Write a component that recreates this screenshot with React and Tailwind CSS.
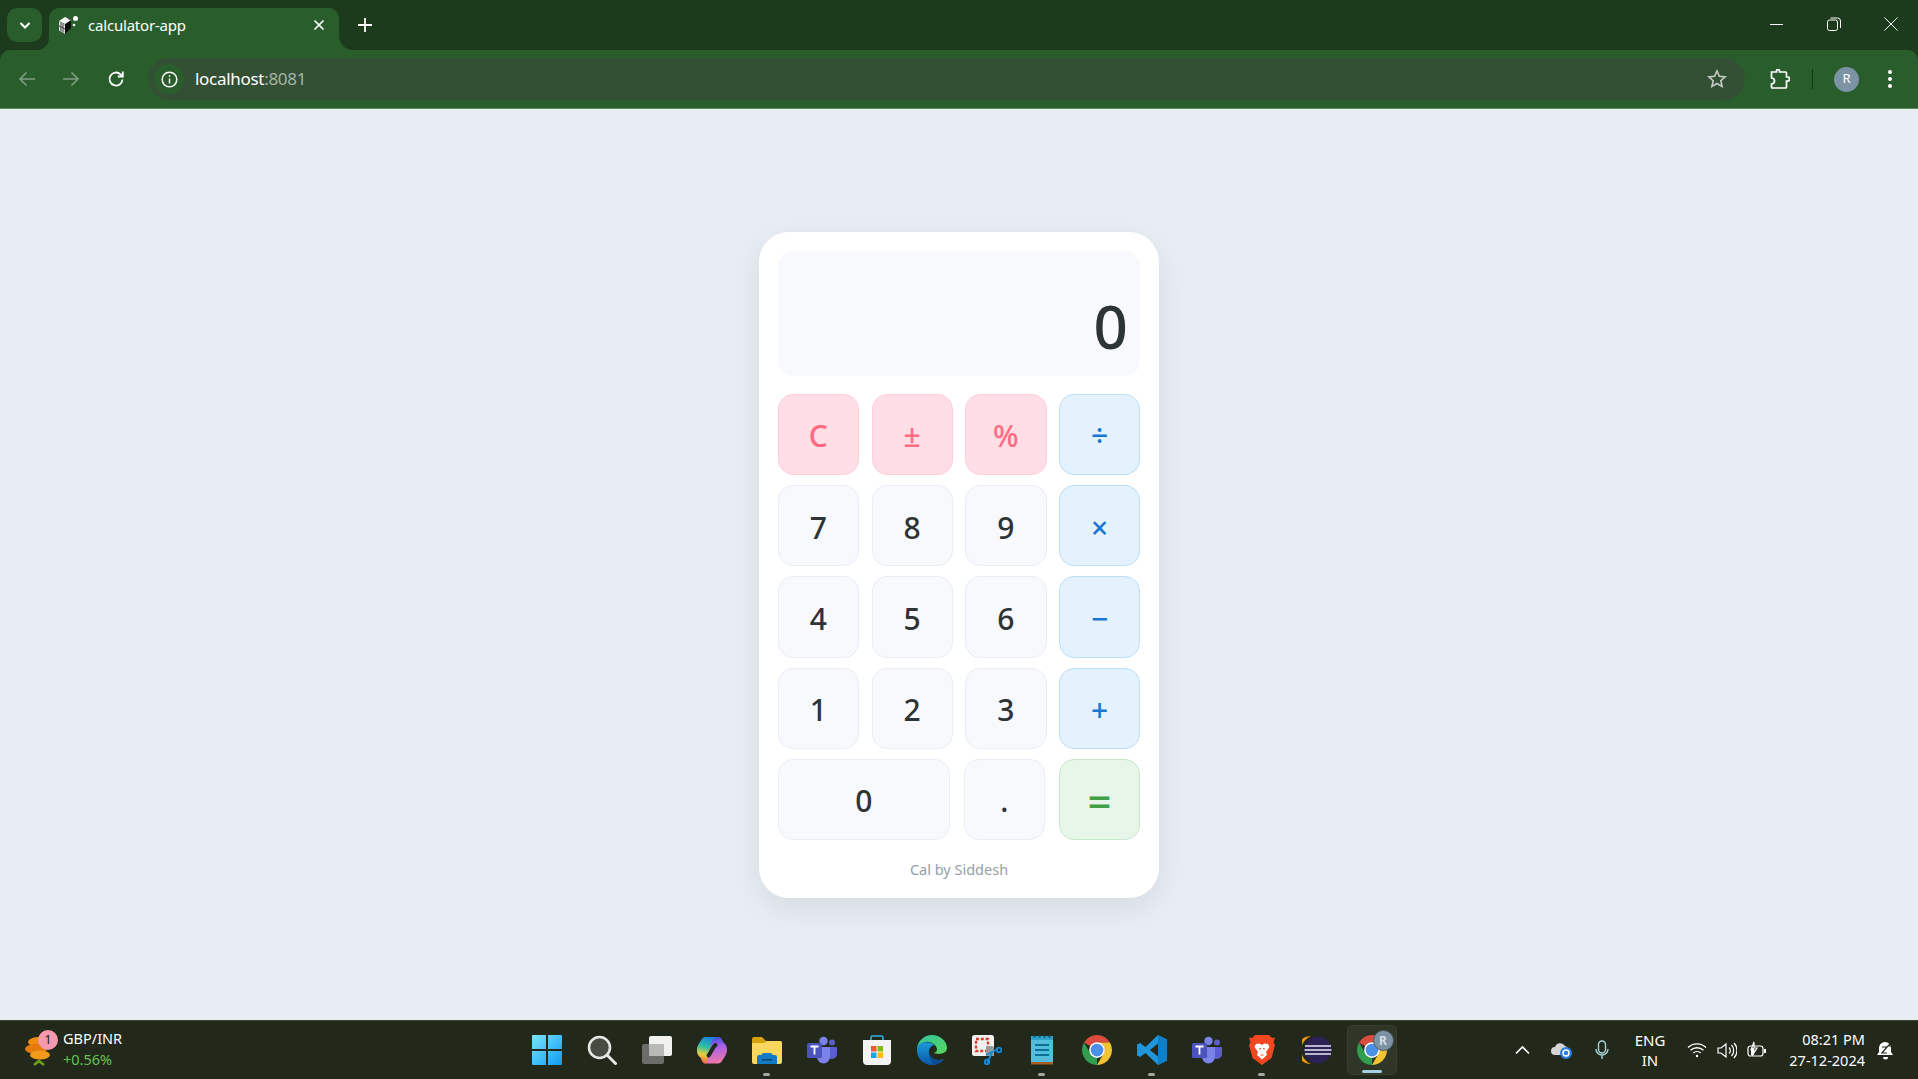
const ui = { fontFamily: '"Noto Sans", "Open Sans", sans-serif' };

function ChromeIcon({ size = 30 }) {
  return (
    <svg width={size} height={size} viewBox="4 4 40 40">
      <path d="M6.68 14A20 20 0 0 1 41.32 14H24A10 10 0 0 0 15.34 19Z" fill="#dd4b3e" />
      <path d="M41.32 14A20 20 0 0 1 24 44L32.66 29A10 10 0 0 0 24 14Z" fill="#f2c230" />
      <path d="M24 44A20 20 0 0 1 6.68 14L15.34 29A10 10 0 0 0 24 34Z" fill="#2f9e4f" />
      <circle cx="24" cy="24" r="10.5" fill="#fff" />
      <circle cx="24" cy="24" r="8.5" fill="#4a8fe8" />
    </svg>
  );
}

function TeamsIcon() {
  return (
    <svg width="30" height="28" viewBox="0 0 30 28">
      <circle cx="25" cy="6.5" r="3" fill="#5b5fc7" />
      <path d="M21 11h8a1 1 0 0 1 1 1v6a5 5 0 0 1-5 5h-1a4 4 0 0 1-3-2Z" fill="#5b5fc7" />
      <circle cx="16.5" cy="5" r="4.2" fill="#7b83eb" />
      <path d="M10 11h13v10a6.5 6.5 0 0 1-13 0Z" fill="#7b83eb" />
      <rect x="0" y="7" width="15" height="15" rx="1.5" fill="#4b53bc" />
      <path d="M3.5 10.5h8M7.5 10.5v8" stroke="#fff" strokeWidth="1.8" fill="none" />
    </svg>
  );
}

function WindowsIcon() {
  return (
    <svg width="30" height="30" viewBox="0 0 30 30">
      <defs>
        <linearGradient id="win" x1="0" y1="0" x2="1" y2="1">
          <stop offset="0" stopColor="#7ae6ff" />
          <stop offset="1" stopColor="#0f9af0" />
        </linearGradient>
      </defs>
      <path d="M1 0h13v14H0V1a1 1 0 0 1 1-1ZM16 0h13a1 1 0 0 1 1 1v13H16ZM0 16h14v14H1a1 1 0 0 1-1-1ZM16 16h14v13a1 1 0 0 1-1 1H16Z" fill="url(#win)" />
    </svg>
  );
}

function SearchIcon() {
  return (
    <svg width="30" height="30" viewBox="0 0 30 30">
      <circle cx="12.5" cy="12.5" r="10.5" fill="#474b42" stroke="#e6e6e4" strokeWidth="2.6" />
      <path d="M20.5 20.5l8 8" stroke="#e6e6e4" strokeWidth="3" strokeLinecap="round" />
    </svg>
  );
}

function TaskViewIcon() {
  return (
    <svg width="30" height="28" viewBox="0 0 30 28">
      <rect x="0" y="8" width="22" height="20" rx="2" fill="#6c6c6a" />
      <rect x="7" y="0" width="23" height="20" rx="2" fill="#f1f1f0" />
      <rect x="7" y="8" width="15" height="12" rx="1" fill="#b9b9b7" />
    </svg>
  );
}

function CopilotIcon() {
  return (
    <svg width="30" height="28" viewBox="0 0 30 28">
      <defs>
        <linearGradient id="cpa" x1="0.6" y1="0" x2="0.4" y2="1">
          <stop offset="0" stopColor="#1b7fe0" />
          <stop offset="0.4" stopColor="#2fc0a0" />
          <stop offset="0.7" stopColor="#e8d038" />
          <stop offset="1" stopColor="#f2643a" />
        </linearGradient>
        <linearGradient id="cpb" x1="0.4" y1="0" x2="0.6" y2="1">
          <stop offset="0" stopColor="#2a4fd8" />
          <stop offset="0.4" stopColor="#a860e8" />
          <stop offset="1" stopColor="#f07aa8" />
        </linearGradient>
      </defs>
      <path d="M9 1H21C24 1 25 3 26 6 29 8 30 11 30 14 30 18 27 22 25 25 24 27 22 27.5 20 27.5H9C6 27.5 5 25 4 22 1 20 0 17 0 14 0 10 3 6 5 3 6 1.500 7.500 1 9 1Z" fill="url(#cpb)" />
      <path d="M9 1H21C17 1 15 4 14 8L11 20C10 25 9 27.5 9 27.5 6 27.5 5 25 4 22 1 20 0 17 0 14 0 10 3 6 5 3 6 1.500 7.500 1 9 1Z" fill="url(#cpa)" />
      <path d="M18.500 9C15.500 11 14.500 16 11.500 19.500" stroke="#22281a" strokeWidth="4" strokeLinecap="round" fill="none" />
    </svg>
  );
}

function ExplorerIcon() {
  return (
    <svg width="30" height="27" viewBox="0 0 30 27">
      <path d="M0 2a2 2 0 0 1 2-2h8l4 4h14a2 2 0 0 1 2 2v5H0Z" fill="#d6a00f" />
      <path d="M0 6h12l3-2h13a2 2 0 0 1 2 2v19a2 2 0 0 1-2 2H2a2 2 0 0 1-2-2Z" fill="#fad75e" />
      <path d="M5 20a2 2 0 0 1 2-2h2l2-2h8l2 2h2a2 2 0 0 1 2 2v7H5Z" fill="#0f7cc4" />
      <rect x="10" y="22" width="10" height="1.5" fill="#063e69" />
    </svg>
  );
}

function StoreIcon() {
  return (
    <svg width="30" height="30" viewBox="0 0 30 30">
      <path d="M9 6V2.5A1.5 1.5 0 0 1 10.5 1h9A1.5 1.5 0 0 1 21 2.5V6" stroke="#28b4ea" strokeWidth="1.6" fill="none" />
      <path d="M1 5h28v21a4 4 0 0 1-4 4H5a4 4 0 0 1-4-4Z" fill="#f3f3f3" />
      <rect x="9" y="11" width="5.5" height="5.5" fill="#f05a28" />
      <rect x="15.5" y="11" width="5.5" height="5.5" fill="#80b91c" />
      <rect x="9" y="17.5" width="5.5" height="5.5" fill="#14a5ea" />
      <rect x="15.5" y="17.5" width="5.5" height="5.5" fill="#fdb90f" />
    </svg>
  );
}

function EdgeIcon() {
  return (
    <svg width="30" height="30" viewBox="0 0 30 30">
      <defs>
        <linearGradient id="edg" x1="0" y1="0" x2="1" y2="1">
          <stop offset="0" stopColor="#2fc3a0" />
          <stop offset="1" stopColor="#5bd85e" />
        </linearGradient>
        <linearGradient id="edb" x1="0" y1="0" x2="0" y2="1">
          <stop offset="0" stopColor="#1a9bd8" />
          <stop offset="1" stopColor="#0b57a6" />
        </linearGradient>
      </defs>
      <path d="M15 0C7 0 1 6 0 13c3-5 8-7 12-6 5 1 8 4 8 8 0 1-1 2-3 3 4 2 13 1 13-5C30 6 23 0 15 0Z" fill="url(#edg)" />
      <path d="M0 13C-1 22 5 30 15 30c5 0 9-2 12-6-5 2-10 1-13-2-3-3-3-8 1-11 1-1 2-1 3-1-6-4-15-4-18 3Z" fill="url(#edb)" />
      <path d="M15 11c-3 2-4 6-2 9 3 5 9 6 14 4-3 4-7 6-12 6 4-1 0-3-2-6-2-5-1-11 2-13Z" fill="#0c4c92" />
    </svg>
  );
}

function SnipIcon() {
  return (
    <svg width="30" height="30" viewBox="0 0 30 30">
      <rect x="0" y="0" width="22" height="21" rx="2.5" fill="#f1f1f1" />
      <rect x="4" y="4" width="12" height="12" fill="none" stroke="#d8402c" strokeWidth="2.4" strokeDasharray="3 1.8" />
      <path d="M14 11h6a2 2 0 0 1 2 2v8h-8Z" fill="#9a9a9a" />
      <path d="M26 14l-12 6M15 28l5-10" stroke="#1689d8" strokeWidth="1.8" fill="none" />
      <circle cx="27" cy="15" r="2.3" fill="none" stroke="#1689d8" strokeWidth="1.8" />
      <circle cx="15" cy="27" r="2.3" fill="none" stroke="#1689d8" strokeWidth="1.8" />
    </svg>
  );
}

function NotepadIcon() {
  return (
    <svg width="24" height="30" viewBox="0 0 24 30">
      <rect x="1" y="1" width="22" height="28" rx="1.5" fill="#53bddc" />
      <rect x="1" y="27" width="22" height="2.5" fill="#a55f2c" />
      <rect x="1" y="1" width="22" height="4" fill="#2da3c9" />
      {[4, 9, 14, 19].map((x) => (
        <circle key={x} cx={x + 0.5} cy="1.8" r="1.3" fill="#14688c" />
      ))}
      <path d="M5 10h14M5 15h14M5 20h14" stroke="#0f6f96" strokeWidth="2" />
    </svg>
  );
}

function VsCodeIcon() {
  return (
    <svg width="30" height="30" viewBox="0 0 30 30">
      <path d="M21 0l9 4.500v21L21 30 8.500 18 3 22 0 20.500v-11L3 8l5.500 4ZM21 8.500L13 15l8 6.500Z" fill="#1f96dc" />
      <path d="M21 0l9 4.500v21L21 30Z" fill="#0d7fc9" />
    </svg>
  );
}

function BraveIcon() {
  return (
    <svg width="26" height="30" viewBox="0 0 26 30">
      <path d="M6 0h14l3 3 3-.5-1.500 5L26 10l-3.500 13L13 30 3.500 23 0 10l1.500-2.500L0 2.500 3 3Z" fill="#f1461f" />
      <path d="M7 9l3.500-.5L13 10l2.500-1.500L19 9l1.500 3-3.500 5 1 3-5 4.500L8 20l1-3-3.500-5Z" fill="#fff" />
      <path d="M10 14l2-.5M16 14l-2-.5M11.500 20h3" stroke="#f1461f" strokeWidth="1.2" />
    </svg>
  );
}

function EclipseIcon() {
  return (
    <svg width="30" height="28" viewBox="0 0 30 28">
      <path d="M9 0A14 14 0 0 0 9 28 15 15 0 0 1 9 0Z" fill="#f0941e" />
      <circle cx="16" cy="14" r="13.5" fill="#2c2255" />
      <path d="M3 10h26M2.500 14h27M3 18h26" stroke="#e8e6f2" strokeWidth="1.4" />
    </svg>
  );
}

const taskIcons = [
  { icon: <WindowsIcon /> },
  { icon: <SearchIcon /> },
  { icon: <TaskViewIcon /> },
  { icon: <CopilotIcon /> },
  { icon: <ExplorerIcon />, dot: true },
  { icon: <TeamsIcon /> },
  { icon: <StoreIcon /> },
  { icon: <EdgeIcon /> },
  { icon: <SnipIcon /> },
  { icon: <NotepadIcon />, dot: true },
  { icon: <ChromeIcon /> },
  { icon: <VsCodeIcon />, dot: true },
  { icon: <TeamsIcon /> },
  { icon: <BraveIcon />, dot: true },
  { icon: <EclipseIcon /> },
];

function TabBar() {
  return (
    <div className="h-[50px] bg-[#1c3b1c] flex items-end relative">
      <div className="absolute left-[7px] top-[8px] w-[35px] h-[34px] rounded-[10px] bg-[#2a5d2c] flex items-center justify-center">
        <svg width="14" height="14" viewBox="0 0 14 14" fill="none" stroke="#fff" strokeWidth="2">
          <path d="M2.5 5l4.5 4.500L11.500 5" />
        </svg>
      </div>
      <div className="relative ml-[49px] w-[290px] h-[42px] bg-[#2a5d2c] rounded-t-[10px] flex items-center pl-[10px] pr-[14px] pb-[8px] text-white">
        <svg className="absolute left-[-12px] bottom-0" width="12" height="12" viewBox="0 0 12 12">
          <path d="M12 0v12H0A12 12 0 0 0 12 0Z" fill="#2a5d2c" />
        </svg>
        <svg className="absolute right-[-14px] bottom-0" width="14" height="14" viewBox="0 0 14 14">
          <path d="M0 0v14h14A14 14 0 0 1 0 0Z" fill="#2a5d2c" />
        </svg>
        <svg width="20" height="20" viewBox="0 0 20 20">
          <path d="M0 6l6-4 6 3-6 4Z" fill="#f4f4f4" />
          <path d="M0 6.500l6 3V19l-6-3.500Z" fill="#e0e0e0" />
          <path d="M6 9.500l6-4V13l-6 6Z" fill="#0c0c0c" />
          <path d="M2 7.500v9M4 8.500v9M0 11l6 3M9 3.500l2 1" stroke="#333" strokeWidth="0.9" />
          <circle cx="16.500" cy="3.500" r="2.500" fill="#fff" />
          <circle cx="15" cy="10" r="1.300" fill="#fff" />
        </svg>
        <span className="ml-[9px] text-[15px] flex-1 tracking-[-0.2px]">calculator-app</span>
        <svg width="12" height="12" viewBox="0 0 12 12" stroke="#fff" strokeWidth="1.7">
          <path d="M1.500 1.500l9 9M10.500 1.500l-9 9" />
        </svg>
      </div>
      <svg className="absolute left-[358px] top-[18px]" width="14" height="14" viewBox="0 0 14 14" stroke="#fff" strokeWidth="1.8">
        <path d="M7 0v14M0 7h14" />
      </svg>
      <div className="absolute right-0 top-0 h-[50px] flex items-center">
        <div className="w-[57px] flex justify-center mb-[2px] mr-[2px]">
          <div className="w-[13px] h-[1px] bg-white" />
        </div>
        <div className="w-[57px] flex justify-center mb-[2px] ml-[-2px]">
          <svg width="14" height="14" viewBox="0 0 14 14" fill="none" stroke="#fff" strokeWidth="1">
            <rect x="0.5" y="3" width="10" height="10.500" rx="2" />
            <path d="M3.5 1h7a3 3 0 0 1 3 3v7" />
          </svg>
        </div>
        <div className="w-[57px] flex justify-center mb-[2px] mr-[-1px]">
          <svg width="14" height="14" viewBox="0 0 14 14" stroke="#fff" strokeWidth="1">
            <path d="M0.5 0.500l13 13M13.500 0.500l-13 13" />
          </svg>
        </div>
      </div>
    </div>
  );
}

function Toolbar() {
  return (
    <div className="h-[59px] bg-[#1c3b1c]">
      <div className="h-[58px] bg-[#2a5d2c] rounded-t-[10px] flex items-center text-white relative">
        <svg className="ml-[18px]" width="18" height="18" viewBox="0 0 18 18" fill="none" stroke="#7f9c80" strokeWidth="1.7">
          <path d="M17 9H2M8.500 2.500L2 9l6.500 6.500" />
        </svg>
        <svg className="ml-[26px]" width="18" height="18" viewBox="0 0 18 18" fill="none" stroke="#7f9c80" strokeWidth="1.7">
          <path d="M1 9h15M9.500 2.500L16 9l-6.500 6.500" />
        </svg>
        <svg className="ml-[27px]" width="18" height="18" viewBox="0 0 18 18" fill="none" stroke="#fff" strokeWidth="1.8">
          <path d="M15.500 9.500a6.500 6.500 0 1 1-2-5.200L15.500 6" />
          <path d="M15.800 1.500v5h-5" />
        </svg>
        <div className="ml-[23px] w-[1597px] h-[42px] rounded-full bg-[#345034] flex items-center pl-[6px] pr-[18px]">
          <div className="w-[30px] h-[30px] rounded-full bg-[#2a5d2c] flex items-center justify-center">
            <svg width="17" height="17" viewBox="0 0 17 17" fill="none" stroke="#fff" strokeWidth="1.5">
              <circle cx="8.500" cy="8.500" r="7.300" />
              <path d="M8.500 7.500v5M8.500 4.200v1.600" />
            </svg>
          </div>
          <div className="ml-[11px] flex-1 text-[17px] tracking-[-0.3px]">
            localhost<span className="text-[#a5b3a5]">:8081</span>
          </div>
          <svg width="20" height="20" viewBox="0 0 20 20" fill="none" stroke="#c6cdc6" strokeWidth="1.6">
            <path d="M10 2l2.400 5.300 5.700.6-4.300 3.800 1.300 5.700L10 14.500l-5.100 2.900 1.300-5.700L1.900 7.900l5.700-.6Z" />
          </svg>
        </div>
        <svg className="ml-[25px]" width="20" height="20" viewBox="0 0 20 20" fill="none" stroke="#fff" strokeWidth="1.7">
          <path d="M1.500 3h5V2a1.500 1.500 0 0 1 3 0v1h6a1 1 0 0 1 1 1v4h1a2 2 0 0 1 0 4h-1v6a1 1 0 0 1-1 1H2a1 1 0 0 1-.5-1v-3a3 3 0 0 0 0-6Z" />
        </svg>
        <div className="ml-[22px] w-[1px] h-[20px] bg-[#163216]" />
        <div className="ml-[21px] w-[25px] h-[25px] rounded-full bg-[#7c93a6] flex items-center justify-center text-[13px] text-white">R</div>
        <svg className="ml-[28px]" width="6" height="20" viewBox="0 0 6 20" fill="#fff">
          <circle cx="3" cy="3" r="2" />
          <circle cx="3" cy="10" r="2" />
          <circle cx="3" cy="17" r="2" />
        </svg>
      </div>
      <div className="h-[1px] bg-[#5d8a5e]" />
    </div>
  );
}

function Key({ label, kind = "num", size = "text-[30px]" }) {
  const styles = {
    num: "bg-[#f8f9fc] border-[#e9edf5] text-[#2d3436]",
    fn: "bg-[#ffdee5] border-[#ffd0da] text-[#ff6b81]",
    op: "bg-[#e3f2fd] border-[#bbdefb] text-[#1976d2]",
    eq: "bg-[#e8f5e9] border-[#c8e6c9] text-[#43a047]",
  };
  return (
    <button className={`h-[81.25px] rounded-[15px] border-[1.25px] flex items-center justify-center pt-[3px] font-medium ${size} ${styles[kind]}`}>
      {label}
    </button>
  );
}

function Calculator() {
  const rows = [
    [["C", "fn"], ["±", "fn"], ["%", "fn"], ["÷", "op"]],
    [["7"], ["8"], ["9"], ["×", "op"]],
    [["4"], ["5"], ["6"], ["−", "op"]],
    [["1"], ["2"], ["3"], ["+", "op"]],
  ];
  return (
    <div className="w-[400px] bg-white rounded-[30px] p-[18.75px] shadow-[0_10px_30px_rgba(0,0,0,0.08)]">
      <div className="h-[125px] rounded-[15px] bg-[#f8f9fd] flex items-end justify-end pr-[12.5px] pb-[9px] text-[60px] font-medium text-[#2d3436] leading-[82px]">
        0
      </div>
      <div className="mt-[18.25px] grid grid-cols-4 gap-x-[12.5px] gap-y-[10px]">
        {rows.flat().map(([label, kind]) => (
          <Key key={label} label={label} kind={kind} />
        ))}
      </div>
      <div className="mt-[10px] grid grid-cols-[172px_81.25px_81.25px] justify-between">
        <Key label="0" />
        <Key label="." />
        <Key label="=" kind="eq" size="text-[42px]" />
      </div>
      <div className="mt-[18.5px] text-center text-[14.5px] leading-[21px] text-[#95a0a8]">Cal by Siddesh</div>
    </div>
  );
}

function Taskbar() {
  return (
    <div className="h-[59px] bg-[#22281a] border-t border-[#3d4137] flex items-center text-white">
      <div className="flex-1 flex items-center">
        <div className="relative w-[38px] h-[40px] ml-[24px]">
          <svg width="30" height="36" viewBox="0 0 30 36" className="absolute left-0 top-[4px]">
            <ellipse cx="15" cy="8" rx="11" ry="5" fill="#f08c10" />
            <ellipse cx="12" cy="15" rx="11" ry="5" fill="#e67a0a" />
            <ellipse cx="16" cy="21" rx="10" ry="4.5" fill="#f29a1c" />
            <path d="M10 31l5-4 5 4" stroke="#6ea314" strokeWidth="2.6" fill="none" />
          </svg>
          <div className="absolute left-[14px] top-0 w-[20px] h-[20px] rounded-full bg-[#f59aae] text-[#222] text-[13px] flex items-center justify-center">1</div>
        </div>
        <div className="ml-[1px] mt-[-2px] text-[14.5px] leading-[21px]">
          <div>GBP/INR</div>
          <div className="text-[#63c354]">+0.56%</div>
        </div>
      </div>
      <div className="flex items-center h-full">
        {taskIcons.map((t, i) => (
          <div key={i} className="relative w-[55px] h-full flex items-center justify-center">
            {t.icon}
            {t.dot && <div className="absolute bottom-[3px] w-[7px] h-[3px] rounded-full bg-[#a5a7a2]" />}
          </div>
        ))}
        <div className="relative w-[50px] h-[50px] mx-[2.5px] rounded-[5px] bg-[#2f3527] border border-[#383e30] flex items-center justify-center">
          <ChromeIcon />
          <div className="absolute left-[25px] top-[4px] w-[21px] h-[21px] rounded-full bg-[#7c93a6] border border-[#4b5a60] text-[12px] font-bold flex items-center justify-center text-[#d5dde3]">R</div>
          <div className="absolute bottom-[1px] w-[20px] h-[3px] rounded-full bg-[#a5d0e4]" />
        </div>
      </div>
      <div className="flex-1 flex items-center justify-end">
        <svg width="15" height="10" viewBox="0 0 15 10" fill="none" stroke="#fff" strokeWidth="1.6">
          <path d="M1 8.500l6.500-6.500 6.500 6.500" />
        </svg>
        <svg className="ml-[21.5px]" width="22" height="18" viewBox="0 0 22 18">
          <path d="M4 14a4 4 0 0 1 0-8 5.500 5.500 0 0 1 10-1 4 4 0 0 1 3 4v5Z" fill="#d5d5d3" />
          <circle cx="15" cy="12" r="6" fill="#2a7fe0" />
          <circle cx="15" cy="12" r="3" fill="none" stroke="#fff" strokeWidth="1.4" />
        </svg>
        <svg className="ml-[22px]" width="14" height="20" viewBox="0 0 14 20" fill="none" stroke="#a9d3dc" strokeWidth="1.4">
          <rect x="3.500" y="1" width="7" height="12" rx="3.500" />
          <path d="M1 9a6 6 0 0 0 12 0M7 15v4" />
        </svg>
        <div className="ml-[22px] w-[38px] text-center text-[15px] leading-[20px]">
          <div>ENG</div>
          <div>IN</div>
        </div>
        <svg className="ml-[18px]" width="20" height="16" viewBox="0 0 20 16" fill="none" stroke="#fff" strokeWidth="1.3">
          <path d="M1 5.500a13 13 0 0 1 18 0M3.500 8.300a9.500 9.500 0 0 1 13 0M6.300 11a5.500 5.500 0 0 1 7.400 0" />
          <circle cx="10" cy="14" r="1.200" fill="#fff" stroke="none" />
        </svg>
        <svg className="ml-[10px]" width="20" height="17" viewBox="0 0 20 17" fill="none" stroke="#fff" strokeWidth="1.2">
          <path d="M1 6h3l5-4v13l-5-4H1ZM12 5.500a4 4 0 0 1 0 6M14.500 3a8 8 0 0 1 0 11M17 1a11 11 0 0 1 0 15" />
        </svg>
        <svg className="ml-[10px]" width="20" height="18" viewBox="0 0 20 18" fill="none" stroke="#fff" strokeWidth="1.2">
          <rect x="1" y="5" width="15" height="10" rx="2.500" />
          <path d="M18 8v4" strokeWidth="2" />
          <path d="M7 1L4 9h3l-2 6 5-8H7Z" fill="#22281a" />
          <path d="M4 7h3v7H4Z" fill="#fff" stroke="none" />
        </svg>
        <div className="ml-[10px] w-[88px] text-right text-[14.5px] leading-[21px] whitespace-nowrap">
          <div>08:21 PM</div>
          <div>27-12-2024</div>
        </div>
        <svg className="ml-[11.5px] mr-[24.5px]" width="17" height="20" viewBox="0 0 17 20">
          <path d="M8 2a6 6 0 0 1 6 6v4l2 3H0l2-3V8a6 6 0 0 1 6-6Z" fill="#fff" />
          <path d="M6 17a2.500 2.500 0 0 0 5 0Z" fill="#fff" />
          <path d="M5 7h5l-5 6h5M11 1h5l-5 5h5" stroke="#22281a" strokeWidth="1.2" fill="none" />
        </svg>
      </div>
    </div>
  );
}

export default function App() {
  return (
    <div className="w-full h-screen flex flex-col overflow-hidden bg-[#e8edf4]" style={ui}>
      <TabBar />
      <Toolbar />
      <main className="flex-1 flex items-center justify-center pt-[1px]">
        <Calculator />
      </main>
      <Taskbar />
    </div>
  );
}
